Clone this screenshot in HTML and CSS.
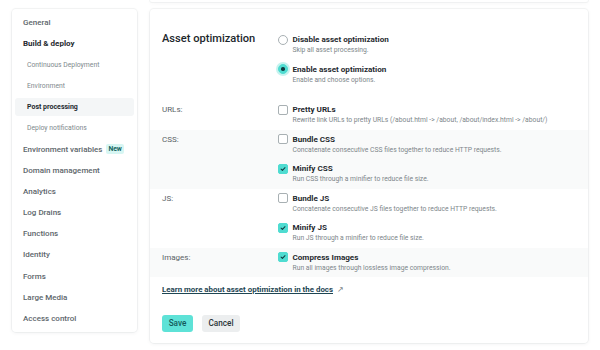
FILE: index.html
```html
<!DOCTYPE html>
<html>
<head>
<meta charset="utf-8">
<link rel="stylesheet" href="styles.css">
</head>
<body>
<div class="page">
  <nav class="sidebar">
    <a class="nav-item">General</a>
    <a class="nav-item strong">Build &amp; deploy</a>
    <a class="nav-sub">Continuous Deployment</a>
    <a class="nav-sub">Environment</a>
    <a class="nav-sub active">Post processing</a>
    <a class="nav-sub">Deploy notifications</a>
    <a class="nav-item">Environment variables <span class="badge">New</span></a>
    <a class="nav-item">Domain management</a>
    <a class="nav-item">Analytics</a>
    <a class="nav-item">Log Drains</a>
    <a class="nav-item">Functions</a>
    <a class="nav-item">Identity</a>
    <a class="nav-item">Forms</a>
    <a class="nav-item">Large Media</a>
    <a class="nav-item">Access control</a>
  </nav>
  <main class="main">
    <div class="card card-prev"></div>
    <section class="card">
      <div class="grid head">
        <h2 class="title">Asset optimization</h2>
        <div class="opts">
          <label class="opt">
            <span class="radio"></span>
            <span class="opt-text"><span class="opt-title">Disable asset optimization</span><span class="opt-desc">Skip all asset processing.</span></span>
          </label>
          <label class="opt">
            <span class="radio on"></span>
            <span class="opt-text"><span class="opt-title">Enable asset optimization</span><span class="opt-desc">Enable and choose options.</span></span>
          </label>
        </div>
      </div>
      <div class="grid group first">
        <div class="label">URLs:</div>
        <div class="opts">
          <label class="opt">
            <span class="check"></span>
            <span class="opt-text"><span class="opt-title">Pretty URLs</span><span class="opt-desc">Rewrite link URLs to pretty URLs (/about.html -&gt; /about, /about/index.html -&gt; /about/)</span></span>
          </label>
        </div>
      </div>
      <div class="grid group shaded">
        <div class="label">CSS:</div>
        <div class="opts">
          <label class="opt">
            <span class="check"></span>
            <span class="opt-text"><span class="opt-title">Bundle CSS</span><span class="opt-desc">Concatenate consecutive CSS files together to reduce HTTP requests.</span></span>
          </label>
          <label class="opt">
            <span class="check on"><svg viewBox="0 0 10 10"><path d="M2.6 5.2 L4.3 6.8 L7.5 3.4"/></svg></span>
            <span class="opt-text"><span class="opt-title">Minify CSS</span><span class="opt-desc">Run CSS through a minifier to reduce file size.</span></span>
          </label>
        </div>
      </div>
      <div class="grid group">
        <div class="label">JS:</div>
        <div class="opts">
          <label class="opt">
            <span class="check"></span>
            <span class="opt-text"><span class="opt-title">Bundle JS</span><span class="opt-desc">Concatenate consecutive JS files together to reduce HTTP requests.</span></span>
          </label>
          <label class="opt">
            <span class="check on"><svg viewBox="0 0 10 10"><path d="M2.6 5.2 L4.3 6.8 L7.5 3.4"/></svg></span>
            <span class="opt-text"><span class="opt-title">Minify JS</span><span class="opt-desc">Run JS through a minifier to reduce file size.</span></span>
          </label>
        </div>
      </div>
      <div class="grid group shaded">
        <div class="label">Images:</div>
        <div class="opts">
          <label class="opt">
            <span class="check on"><svg viewBox="0 0 10 10"><path d="M2.6 5.2 L4.3 6.8 L7.5 3.4"/></svg></span>
            <span class="opt-text"><span class="opt-title">Compress Images</span><span class="opt-desc">Run all images through lossless image compression.</span></span>
          </label>
        </div>
      </div>
      <div class="docs">
        <a class="docs-link">Learn more about asset optimization in the docs</a><span class="ext">&#8599;</span>
      </div>
      <div class="actions">
        <button class="btn save">Save</button>
        <button class="btn cancel">Cancel</button>
      </div>
    </section>
  </main>
</div>
</body>
</html>
```

FILE: styles.css
```css
* { box-sizing: border-box; }
html, body { margin: 0; padding: 0; }
body {
  background: #ffffff;
  font-family: Roboto, "Liberation Sans", sans-serif;
  color: #1f2b30;
  width: 600px;
  height: 350px;
  overflow: hidden;
}
.page {
  display: flex;
  gap: 13px;
  padding-left: 12px;
}
.card {
  background: #fff;
  border-radius: 4px;
  box-shadow: 0 0 0 1px rgba(20, 40, 50, 0.045), 0 1px 4px rgba(20, 40, 50, 0.06);
}
.sidebar {
  margin-top: 9px;
  width: 125px;
  padding: 3px;
  background: #fff;
  border-radius: 4px;
  box-shadow: 0 0 0 1px rgba(20, 40, 50, 0.045), 0 1px 4px rgba(20, 40, 50, 0.06);
  display: flex;
  flex-direction: column;
  height: 323px;
}
.nav-item, .nav-sub {
  display: flex;
  align-items: center;
  height: 21.2px;
  white-space: nowrap;
}
.nav-item {
  padding-left: 8px;
  font-size: 8px;
  font-weight: 500;
  color: #5d666b;
}
.nav-item.strong { color: #1f2a2f; font-weight: 700; }
.nav-sub {
  padding-left: 12px;
  font-size: 6.8px;
  color: #80898d;
}
.nav-sub.active {
  background: #f4f6f7;
  border-radius: 3px;
  color: #1f2a2f;
  font-weight: 700;
  font-size: 7px;
  height: 18px;
  margin: 1.6px 0;
}
.badge {
  margin-left: 4px;
  background: #d7f6f3;
  color: #14635e;
  font-weight: 700;
  font-size: 6.8px;
  padding: 1px 2px;
  border-radius: 2px;
}
.main {
  width: 438px;
  display: flex;
  flex-direction: column;
  gap: 7px;
}
.card-prev {
  height: 2px;
  border-radius: 0 0 4px 4px;
}
.grid {
  display: grid;
  grid-template-columns: 116px 1fr;
  padding-left: 12px;
}
.head { padding-top: 21px; padding-bottom: 11px; }
.title {
  margin: 0;
  font-size: 11.1px;
  font-weight: 500;
  color: #1c272c;
  line-height: 18px;
}
.opts { display: flex; flex-direction: column; }
.opt {
  display: flex;
  align-items: flex-start;
  gap: 4.5px;
  height: 29.5px;
  padding-top: 4px;
}
.opt-text { display: flex; flex-direction: column; }
.opt-title {
  font-size: 8.1px;
  font-weight: 700;
  color: #1f2a2f;
  line-height: 11px;
}
.opt-desc {
  font-size: 6.75px;
  color: #7d868a;
  line-height: 10px;
  white-space: nowrap;
}
.label {
  font-size: 8px;
  color: #596266;
  line-height: 11px;
  padding-top: 4px;
}
.shaded { background: #f9fafa; }
.radio {
  width: 10px; height: 10px;
  margin-top: 0.5px;
  border: 1px solid #a8b0b3;
  border-radius: 50%;
  background: #fff;
  flex: none;
  display: flex;
  align-items: center;
  justify-content: center;
}
.radio.on {
  background: #4fdcd1;
  border-color: #4fdcd1;
  box-shadow: 0 0 0 2px #c5f3ef;
}
.radio.on::after {
  content: "";
  width: 3.5px; height: 3.5px;
  border-radius: 50%;
  background: #0f3b40;
}
.check {
  width: 10px; height: 10px;
  margin-top: 0.5px;
  border: 1px solid #a8b0b3;
  border-radius: 2px;
  background: #fff;
  flex: none;
  display: flex;
}
.check.on { background: #4fdcd1; border-color: #4fdcd1; }
.check svg { width: 100%; height: 100%; }
.check path { fill: none; stroke: #0f3b40; stroke-width: 1.3; stroke-linecap: round; stroke-linejoin: round; }
.docs {
  padding: 3px 12px 0;
  height: 22px;
  display: flex;
  align-items: center;
  gap: 4px;
}
.docs-link {
  font-size: 7.9px;
  font-weight: 700;
  color: #1e4653;
  text-decoration: underline;
  text-underline-offset: 1px;
}
.ext { font-size: 7.5px; color: #7a8387; }
.actions {
  display: flex;
  gap: 9px;
  padding: 16px 12px 11px;
}
.btn {
  font-family: Roboto, "Liberation Sans", sans-serif;
  font-size: 8.2px;
  font-weight: 500;
  border: none;
  border-radius: 3px;
  height: 17px;
  padding: 0;
  line-height: 17px;
}
.save { background: #5ee2d7; color: #135a5a; width: 31px; }
.cancel { background: #eceeef; color: #2b3438; width: 38px; }
```
